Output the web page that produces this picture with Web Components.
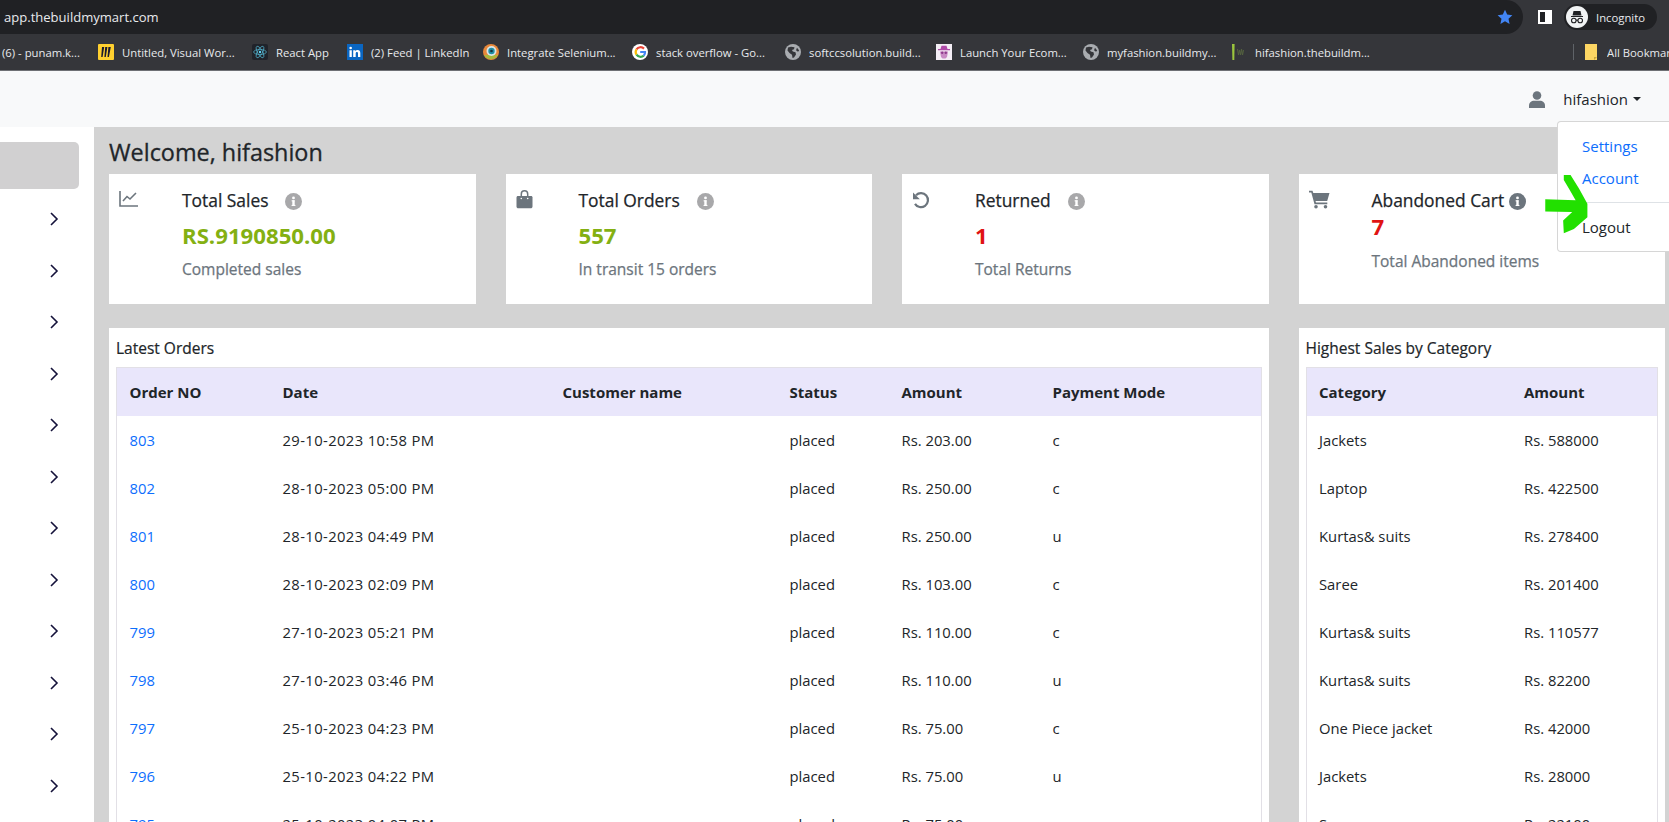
<!DOCTYPE html>
<html lang="en"><head><meta charset="utf-8"><title>Dashboard</title>
<style>
html,body{margin:0;padding:0;height:822px;overflow:hidden;background:#fff;font-family:"Open Sans","Noto Sans",sans-serif;color:#212529}
</style></head><body>
<app-shell></app-shell>
<script>
const FONT='"Open Sans","Noto Sans",sans-serif';
const ICONS={
 miro:'<svg width="16" height="16" viewBox="0 0 16 16"><rect width="16" height="16" rx="1" fill="#ffd02f"/><path d="M4 3h2.2L4.6 13H3.2zM7.2 3h2.2L7.8 13H6.4zM10.4 3h2.4L10.9 13H9.5z" fill="#1a1a2e"/></svg>',
 react:'<svg width="16" height="16" viewBox="0 0 16 16"><rect width="16" height="16" rx="2" fill="#20232a"/><g fill="none" stroke="#61dafb" stroke-width=".7" opacity=".8"><ellipse cx="8" cy="8" rx="6.4" ry="2.5"/><ellipse cx="8" cy="8" rx="6.4" ry="2.5" transform="rotate(60 8 8)"/><ellipse cx="8" cy="8" rx="6.4" ry="2.5" transform="rotate(120 8 8)"/></g><circle cx="8" cy="8" r="1.2" fill="#61dafb"/></svg>',
 linkedin:'<svg width="16" height="16" viewBox="0 0 16 16"><rect width="16" height="16" fill="#0a66c2"/><path d="M2.5 6.2h2.3V13H2.5zM6.2 6.2h2.2v1c.5-.7 1.2-1.2 2.2-1.2 1.9 0 2.7 1.200 2.700 3.100V13h-2.300V9.500c0-.9-.3-1.500-1.100-1.500s-1.200.6-1.200 1.500V13H6.200z" fill="#fff"/><circle cx="3.650" cy="4" r="1.300" fill="#fff"/></svg>',
 selenium:'<svg width="16" height="16" viewBox="0 0 16 16"><circle cx="8" cy="8" r="8" fill="#e8883a"/><path d="M1 11a8 8 0 0 0 14 0z" fill="#a8b83c"/><circle cx="8.500" cy="7" r="5" fill="#d9e6e8"/><circle cx="8.500" cy="7" r="3.200" fill="#1f8fa6"/><circle cx="8.500" cy="7" r="1.300" fill="#16323c"/></svg>',
 google:'<svg width="16" height="16" viewBox="0 0 16 16"><circle cx="8" cy="8" r="8" fill="#fff"/><g fill="none" stroke-width="2.200"><path d="M12 4.600A5 5 0 0 0 4.500 5.300" stroke="#ea4335"/><path d="M4.500 5.300a5 5 0 0 0 0 5.400" stroke="#fbbc05"/><path d="M4.500 10.700a5 5 0 0 0 7.300 .9" stroke="#34a853"/><path d="M11.800 11.600A5 5 0 0 0 13 8H8.200" stroke="#4285f4"/></g></svg>',
 globe:'<svg width="16" height="16" viewBox="0 0 16 16"><circle cx="8" cy="8" r="8" fill="#a9acb0"/><path d="M3 3.500 6 2.800 9.500 3.300 9 5.200 7 6 7.800 7.600 10.500 8.200 11 10.500 9 13.500 7.500 14 7 10.800 4.500 9 2.500 6.500zM12 3.800l2.200 2.700-1.200 1.200-2-1.500z" fill="#35363a"/></svg>',
 launch:'<svg width="16" height="16" viewBox="0 0 16 16"><rect width="16" height="16" fill="#f4eef5"/><path d="M4.500 5 5.500 1.800h5L11.500 5H14v1.300H2V5z" fill="#b04aa8"/><path d="M4 7.500h8L11 13l-1.500 1.500h-3L5 13z" fill="#c98ac4"/><circle cx="6.200" cy="8.800" r="1.200" fill="#8e3a8c"/><circle cx="9.800" cy="8.800" r="1.200" fill="#8e3a8c"/></svg>',
 hifashion:'<svg width="16" height="16" viewBox="0 0 16 16"><path d="M1 0h2.600l-.3 16H1.400z" fill="#9bc53d"/><path d="M6.500 5l1 6 1-5 1 5 1-6 1 6 1-5" fill="none" stroke="#55633f" stroke-width="1"/></svg>',
 folder:'<svg width="12" height="16" viewBox="0 0 12 16"><path d="M0 0h12v16H0z" fill="#fdd663"/><path d="M9 16v-3h3z" fill="#c9a63c"/></svg>'
};

function shadow(el,html){const r=el.attachShadow({mode:'open'});r.innerHTML=html;return r;}

class BookmarkItem extends HTMLElement{constructor(){super();const ic=this.getAttribute('icon');
 shadow(this,`<style>:host{display:flex;align-items:center;gap:8px;flex:none;width:var(--w);white-space:nowrap;overflow:hidden;font-size:11.3px;color:#e8eaed}svg{display:block}.i{flex:none;display:flex}</style>${ic?`<span class="i">${ICONS[ic]}</span>`:''}<slot></slot>`);
 this.style.setProperty('--w',this.getAttribute('w')+'px');}}
customElements.define('bookmark-item',BookmarkItem);

class BrowserChrome extends HTMLElement{constructor(){super();
 const items=[[null,'(6) - punam.k...',96],['miro','Untitled, Visual Wor...',154],['react','React App',95],['linkedin','(2) Feed | LinkedIn',136],['selenium','Integrate Selenium...',149],['google','stack overflow - Go...',153],['globe','softccsolution.build...',151],['launch','Launch Your Ecom...',147],['globe','myfashion.buildmy...',148],['hifashion','hifashion.thebuildm...',150]];
 shadow(this,`<style>
 :host{display:block;height:71px;background:#35363a;font-family:${FONT};color:#e8eaed}
 .top{height:34px;display:flex;align-items:center}
 .omni{width:1523px;height:34px;box-sizing:border-box;background:#202124;border-radius:0 17px 17px 0;display:flex;align-items:center;justify-content:space-between;padding:0 10px 0 4px;font-size:13.05px}
 .panel{margin-left:15px;width:5px;height:10px;border:2px solid #fff;border-right-width:7px;background:#202124;flex:none}
 .pill{margin-left:12px;width:93px;height:26px;border-radius:13px;background:#202124;display:flex;align-items:center;gap:8px;padding-left:2px;box-sizing:border-box;font-size:11.3px}
 .marks{height:36px;box-sizing:border-box;display:flex;align-items:center;padding-left:2px;position:relative}
 .right{margin-left:auto;display:flex;align-items:center;gap:10px;width:96px;flex:none;overflow:hidden;border-left:1px solid #5f6368;height:16px;padding-left:11px;box-sizing:border-box}
 .line{height:1px;background:#6e7074}
 svg{display:block;flex:none}
 </style>
 <div class="top"><div class="omni"><span>app.thebuildmymart.com</span><svg width="16" height="16" viewBox="0 0 16 16"><path d="M8 .8l2.200 4.800 5.200.6-3.900 3.500 1.100 5.200L8 12.300l-4.600 2.600 1.100-5.200L.6 6.200l5.200-.6z" fill="#4285f4"/></svg></div>
 <div class="panel"></div>
 <div class="pill"><svg width="22" height="22" viewBox="0 0 22 22"><circle cx="11" cy="11" r="11" fill="#f1f3f4"/><path d="M5 10h12v1H5zM7.500 5h7l1 4.500h-9z" fill="#202124"/><g fill="none" stroke="#202124" stroke-width="1.100"><circle cx="7.800" cy="14.500" r="2.300"/><circle cx="14.200" cy="14.500" r="2.300"/><path d="M10 14.200h2"/></g></svg><span>Incognito</span></div></div>
 <div class="marks">${items.map(([i,t,w])=>`<bookmark-item ${i?`icon="${i}"`:''} w="${w}">${t}</bookmark-item>`).join('')}
 <div class="right">${ICONS.folder}<bookmark-item w="70">All Bookmarks</bookmark-item></div></div>
 <div class="line"></div>`);}}
customElements.define('browser-chrome',BrowserChrome);

class TopNav extends HTMLElement{constructor(){super();
 shadow(this,`<style>
 :host{display:flex;height:56px;background:#f8f9fa;justify-content:flex-end;align-items:center;padding-right:28px;font-family:${FONT};font-size:15px;color:#212529;flex:none}
 .u{margin-right:17px;display:block}
 .c{width:0;height:0;border:4px solid transparent;border-top-color:#212529;border-bottom:0;margin-left:5px}
 </style>
 <svg class="u" width="18" height="17" viewBox="0 0 18 17"><circle cx="9" cy="4.500" r="4.300" fill="#6c757d"/><path d="M1 17v-2.500C1 11.500 3.500 9.800 6 9.800h6c2.500 0 5 1.700 5 4.700V17z" fill="#6c757d"/></svg>
 <span>hifashion</span><span class="c"></span>`);}}
customElements.define('top-nav',TopNav);

class SideBar extends HTMLElement{constructor(){super();
 const chev='<svg width="10" height="14" viewBox="0 0 10 14"><path d="M2 1l6 6-6 6" fill="none" stroke="#14123a" stroke-width="1.600"/></svg>';
 shadow(this,`<style>
 :host{display:block;width:94px;flex:none;background:#fff;padding-top:15px;box-sizing:border-box;overflow:hidden}
 .a{height:47px;width:79px;background:#d1d0d1;border-radius:0 5px 5px 0;margin-bottom:4.300px}
 .r{height:51.500px;display:flex;align-items:center;padding-left:49px}
 svg{display:block}
 </style><div class="a"></div>${Array.from({length:12},()=>`<div class="r">${chev}</div>`).join('')}`);}}
customElements.define('side-bar',SideBar);

const STAT={
 chart:'<svg width="20" height="16" viewBox="0 0 20 16"><path d="M1 0v15h18" fill="none" stroke="#6c757d" stroke-width="1.600"/><path d="M4 10l4-4.500 3 2.500 6-6" fill="none" stroke="#6c757d" stroke-width="1.600"/></svg>',
 bag:'<svg width="17" height="19" viewBox="0 0 17 19"><path d="M5.300 6V4a3.200 3.200 0 0 1 6.400 0v2" fill="none" stroke="#6c757d" stroke-width="1.500"/><path d="M2 6h13c1 0 1.500.6 1.500 1.500v9c0 1-.8 1.800-1.800 1.800H2.300c-1 0-1.800-.8-1.800-1.800v-9C.5 6.600 1 6 2 6z" fill="#6c757d"/><circle cx="5.300" cy="8.500" r=".8" fill="#fff"/><circle cx="11.700" cy="8.500" r=".8" fill="#fff"/></svg>',
 undo:'<svg width="18" height="18" viewBox="0 0 18 18"><path d="M4 4.200A7 7 0 1 1 3 12.800" fill="none" stroke="#6c757d" stroke-width="2.200"/><path d="M1 1.500v6.800h6.800z" fill="#6c757d"/></svg>',
 cart:'<svg width="21" height="19" viewBox="0 0 21 19"><path d="M0 .8h3.500l.8 2.200H20.500l-2.300 8H6.500l.5 1.600h11.300v1.700H5.500L2.300 2.500H0z" fill="#6c757d"/><circle cx="7" cy="16.800" r="1.800" fill="#6c757d"/><circle cx="16.500" cy="16.800" r="1.800" fill="#6c757d"/></svg>'
};
class StatCard extends HTMLElement{constructor(){super();
 const a=n=>this.getAttribute(n);
 shadow(this,`<style>
 :host{display:flex;background:#fff;height:130px;box-sizing:border-box;padding:14px 0 0 10px;font-family:${FONT}}
 .ic{width:63px;flex:none;padding-top:${a('iy')||3}px}
 .ic svg{display:block}
 .t{font-size:17.400px;line-height:24px;font-weight:400;-webkit-text-stroke:.25px #212529;color:#212529;display:flex;align-items:center;white-space:nowrap}
 .t svg{margin-left:${a('gap')||17}px;margin-top:2px;display:block}
 .v{font-size:22.200px;line-height:24px;font-weight:700;color:${a('color')};margin-top:${a('vm')||12}px}
 .s{font-size:15.500px;line-height:20px;font-weight:400;-webkit-text-stroke:.25px #6c757d;color:#6c757d;margin-top:${a('sm')||11}px;white-space:nowrap}
 </style>
 <div class="ic">${STAT[a('icon')]}</div>
 <div><div class="t"><slot name="title"></slot><svg width="17" height="17" viewBox="0 0 17 17"><circle cx="8.500" cy="8.500" r="8.500" fill="${a('info')||'#a8a8aa'}"/><rect x="7.300" y="7.300" width="2.400" height="5.600" fill="#fff"/><rect x="6.600" y="7.300" width="3" height="1.100" fill="#fff"/><rect x="6.600" y="11.900" width="3.800" height="1.100" fill="#fff"/><circle cx="8.500" cy="4.900" r="1.400" fill="#fff"/></svg></div>
 <div class="v"><slot name="value"></slot></div><div class="s"><slot name="sub"></slot></div></div>`);}}
customElements.define('stat-card',StatCard);

class DataTable extends HTMLElement{constructor(){super();
 shadow(this,`<style>
 :host{display:block;font-family:${FONT}}
 table{border-collapse:separate;border-spacing:0;table-layout:fixed;width:100%;border:1px solid #e2e0e6;border-bottom:0;font-size:14.800px;color:#212529}
 th{background:#e9e6fb;font-weight:700;text-align:left;padding:12px 0 12px 12.500px;line-height:24px;white-space:nowrap;font-size:15px}
 td{padding:12px 0 12px 12.500px;line-height:24px;white-space:nowrap}
 td.sp{letter-spacing:.38px}
 a{color:#0d6efd;text-decoration:none}
 </style><table><colgroup></colgroup><thead><tr></tr></thead><tbody></tbody></table>`);}
 set data({cols,head,rows,link,spaced}){const r=this.shadowRoot;
 r.querySelector('colgroup').innerHTML=cols.map(c=>`<col${c?` style="width:${c}px"`:''}>`).join('');
 r.querySelector('thead tr').innerHTML=head.map(h=>`<th>${h}</th>`).join('');
 r.querySelector('tbody').innerHTML=rows.map(row=>'<tr>'+row.map((c,i)=>`<td${spaced===i?' class="sp"':''}>${link&&i===0?`<a href="#">${c}</a>`:c}</td>`).join('')+'</tr>').join('');}}
customElements.define('data-table',DataTable);

class PanelCard extends HTMLElement{constructor(){super();
 shadow(this,`<style>
 :host{display:block;background:#fff;padding:8px 7px 0;box-sizing:border-box;font-family:${FONT}}
 .h{font-size:15.500px;line-height:24px;font-weight:400;-webkit-text-stroke:.2px #212529;margin-bottom:7px;color:#212529;white-space:nowrap}
 </style><div class="h"><slot name="title"></slot></div><slot></slot>`);}}
customElements.define('panel-card',PanelCard);

class UserMenu extends HTMLElement{constructor(){super();
 shadow(this,`<style>
 :host{position:absolute;left:1557px;top:121px;width:140px;height:131px;box-sizing:border-box;background:#fff;border:1px solid rgba(0,0,0,.16);border-radius:4px;font-family:${FONT};font-size:15px;line-height:24px;display:block;padding-top:12px}
 a{display:block;padding-left:24px;color:#0d6efd;text-decoration:none}
 a+a{margin-top:8px}
 hr{border:0;border-top:1px solid #dee2e6;margin:12px 0 12px}
 a.d{color:#212529}
 </style><a href="#">Settings</a><a href="#">Account</a><hr><a class="d" href="#">Logout</a>`);}}
customElements.define('user-menu',UserMenu);

class GreenArrow extends HTMLElement{constructor(){super();
 shadow(this,`<style>:host{position:absolute;left:1545px;top:174px;display:block;width:43px;height:60px}svg{display:block}</style>
 <svg width="43" height="60" viewBox="795 222 126 178"><path d="M850 225L870 225 895 265 920 310 920 350 880 385 850 398 848 360 875 335 795 333 795 297 885 300 865 265 850 240z" fill="#22e000"/></svg>`);}}
customElements.define('green-arrow',GreenArrow);

class AppShell extends HTMLElement{constructor(){super();
 shadow(this,`<style>
 :host{display:flex;flex-direction:column;position:relative;width:1669px;height:822px;overflow:hidden;font-family:${FONT}}
 .body{display:flex;flex:1;min-height:0}
 main{flex:1;min-width:0;background:#d3d3d3;padding:0 4px 0 15px;overflow:hidden}
 h1{margin:0;font-size:23.400px;line-height:32px;font-weight:400;-webkit-text-stroke:.3px #212529;padding:9px 0 6px;color:#212529}
 .g{display:grid;grid-template-columns:repeat(4,1fr);column-gap:30px}
 .g+.g{margin-top:24px}
 .w{grid-column:span 3}
 </style>
 <browser-chrome></browser-chrome><top-nav></top-nav>
 <div class="body"><side-bar></side-bar><main>
 <h1>Welcome, hifashion</h1>
 <div class="g">
 <stat-card icon="chart" color="#84b012"><span slot="title">Total Sales</span><span slot="value">RS.9190850.00</span><span slot="sub">Completed sales</span></stat-card>
 <stat-card icon="bag" iy="2" color="#84b012"><span slot="title">Total Orders</span><span slot="value">557</span><span slot="sub">In transit 15 orders</span></stat-card>
 <stat-card icon="undo" iy="3" color="#e01313"><span slot="title">Returned</span><span slot="value">1</span><span slot="sub">Total Returns</span></stat-card>
 <stat-card icon="cart" iy="2" color="#e01313" gap="5" info="#6c757d" vm="3" sm="12"><span slot="title">Abandoned Cart</span><span slot="value">7</span><span slot="sub">Total Abandoned items</span></stat-card>
 </div>
 <div class="g">
 <panel-card class="w"><span slot="title">Latest Orders</span><data-table id="a"></data-table></panel-card>
 <panel-card><span slot="title">Highest Sales by Category</span><data-table id="b"></data-table></panel-card>
 </div>
 </main></div>
 <user-menu></user-menu><green-arrow></green-arrow>`);
 const p='placed';
 this.shadowRoot.getElementById('a').data={link:true,spaced:1,cols:[153,280,227,112,151,0],head:['Order NO','Date','Customer name','Status','Amount','Payment Mode'],rows:[
 ['803','29-10-2023 10:58 PM','',p,'Rs. 203.00','c'],['802','28-10-2023 05:00 PM','',p,'Rs. 250.00','c'],['801','28-10-2023 04:49 PM','',p,'Rs. 250.00','u'],['800','28-10-2023 02:09 PM','',p,'Rs. 103.00','c'],['799','27-10-2023 05:21 PM','',p,'Rs. 110.00','c'],['798','27-10-2023 03:46 PM','',p,'Rs. 110.00','u'],['797','25-10-2023 04:23 PM','',p,'Rs. 75.00','c'],['796','25-10-2023 04:22 PM','',p,'Rs. 75.00','u'],['795','25-10-2023 04:07 PM','',p,'Rs. 75.00','c']]};
 this.shadowRoot.getElementById('b').data={cols:[205,0],head:['Category','Amount'],rows:[
 ['Jackets','Rs. 588000'],['Laptop','Rs. 422500'],['Kurtas&amp; suits','Rs. 278400'],['Saree','Rs. 201400'],['Kurtas&amp; suits','Rs. 110577'],['Kurtas&amp; suits','Rs. 82200'],['One Piece jacket','Rs. 42000'],['Jackets','Rs. 28000'],['Saree','Rs. 22100']]};
 }}
customElements.define('app-shell',AppShell);
</script>
</body></html>
